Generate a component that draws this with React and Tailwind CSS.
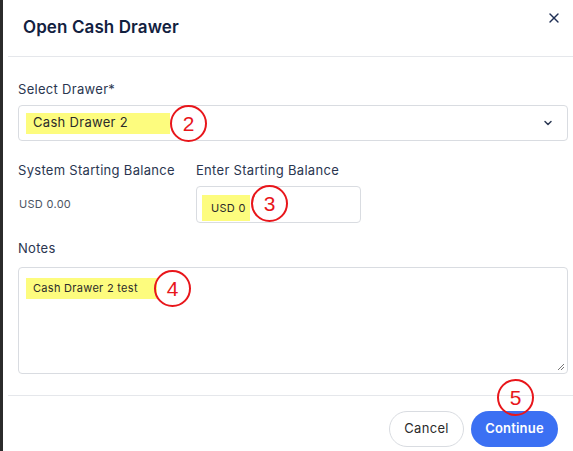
import { X, ChevronDown } from 'lucide-react';

const font = { fontFamily: 'Inter, "Noto Sans", sans-serif' };

function Mark({ n, className }) {
  return (
    <div
      className={`absolute w-[37px] h-[37px] rounded-full border-2 border-[#e8161b] flex items-center justify-center text-[21px] text-[#e8161b] font-['Liberation_Sans',Arial,sans-serif] ${className}`}
    >
      {n}
    </div>
  );
}

export default function App() {
  return (
    <div className="relative w-[573px] h-[451px] bg-white overflow-hidden border-l-[3px] border-[#2b2b2b] text-[#1f2a44]" style={font}>
      {/* Header */}
      <div className="ml-[5px] h-[57px] border-b border-[#e5e7eb] flex items-center justify-between pl-[15px] pr-[11px]">
        <h2 className="text-[17px] font-semibold text-[#12213f] tracking-[0.1px] -mt-[1px]">Open Cash Drawer</h2>
        <X className="w-[16px] h-[16px] text-[#1f2f55] -mt-[20px]" strokeWidth={2} />
      </div>

      {/* Body */}
      <div className="pl-[15px] pr-[5px] pt-[24px] tracking-[0.3px]">
        <label className="block text-[13px] text-[#2a3650] leading-[16px]">Select Drawer*</label>
        <div className="mt-[8px] h-[36px] border border-[#d9dce1] rounded-[4px] flex items-center justify-between pl-[7px] pr-[13px]">
          <span className="bg-[#fdfc7e] h-[21px] w-[144px] flex items-center pl-[7px] text-[13px] text-[#2b2b2b]">Cash Drawer 2</span>
          <ChevronDown className="w-[12px] h-[12px] text-[#2d3a55]" strokeWidth={3} />
        </div>

        <div className="mt-[21px] flex">
          <div className="w-[178px]">
            <div className="text-[13px] text-[#2a3650] leading-[16px]">System Starting Balance</div>
            <div className="mt-[18px] text-[11px] text-[#4b5563] pl-[1px]">USD 0.00</div>
          </div>
          <div>
            <div className="text-[13px] text-[#2a3650] leading-[16px]">Enter Starting Balance</div>
            <div className="mt-[8px] w-[165px] h-[37px] border border-[#d9dce1] rounded-[4px] flex items-end pl-[5px] pb-[1px]">
              <span className="bg-[#fdfc7e] h-[26px] w-[48px] flex items-center pl-[9px] text-[11px] text-[#2b2b2b]">USD 0</span>
            </div>
          </div>
        </div>

        <label className="block mt-[17px] text-[13px] text-[#2a3650] leading-[16px]">Notes</label>
        <div className="relative mt-[11px] h-[107px] border border-[#d9dce1] rounded-[4px] pl-[7px] pt-[10px]">
          <span className="bg-[#fdfc7e] h-[21px] w-[131px] flex items-center pl-[7px] text-[11px] text-[#2b2b2b]">Cash Drawer 2 test</span>
          <svg className="absolute right-[2px] bottom-[2px]" width="8" height="8" viewBox="0 0 8 8">
            <path d="M7 1 L1 7 M7 4 L4 7" stroke="#777" strokeWidth="1" />
          </svg>
        </div>
      </div>

      {/* Footer */}
      <div className="ml-[5px] mt-[21px] border-t border-[#e5e7eb] flex justify-end gap-[7px] pt-[15px] pr-[15px]">
        <button className="w-[75px] h-[36px] rounded-full border border-[#d9dce1] bg-white text-[13px] tracking-[0.3px] text-[#2b2b2b]">Cancel</button>
        <button className="w-[87px] h-[36px] rounded-full bg-[#3b70f3] text-[13px] font-semibold tracking-[0.2px] text-white">Continue</button>
      </div>

      {/* Annotation marks */}
      <Mark n="2" className="left-[167px] top-[105px]" />
      <Mark n="3" className="left-[248px] top-[185px]" />
      <Mark n="4" className="left-[151px] top-[270px]" />
      <Mark n="5" className="left-[494px] top-[379px]" />
    </div>
  );
}
